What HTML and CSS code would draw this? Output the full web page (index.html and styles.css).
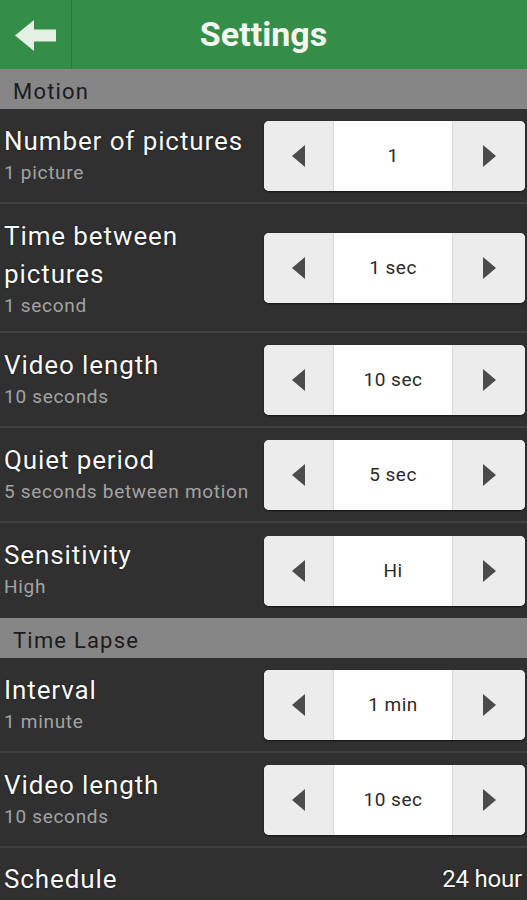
FILE: index.html
```html
<!DOCTYPE html>
<html lang="en">
<head>
  <meta charset="UTF-8">
  <title>Settings</title>
  <link rel="stylesheet" href="styles.css">
</head>
<body>

  <div class="topbar">
    <div class="back">
      <svg width="41" height="32" viewBox="0 0 41 32">
        <path d="M0 15.5 L19 0 L19 9.5 L41 9.5 L41 21.5 L19 21.5 L19 31 Z" fill="#e4f0e4"/>
      </svg>
    </div>
    <h1>Settings</h1>
  </div>

  <div class="section">Motion</div>

  <div class="row">
    <div class="label">
      <div class="title">Number of pictures</div>
      <div class="sub">1 picture</div>
    </div>
    <div class="stepper">
      <div class="btn"><span class="tri left"></span></div>
      <div class="value">1</div>
      <div class="btn"><span class="tri right"></span></div>
    </div>
  </div>

  <div class="row tall">
    <div class="label">
      <div class="title">Time between pictures</div>
      <div class="sub">1 second</div>
    </div>
    <div class="stepper">
      <div class="btn"><span class="tri left"></span></div>
      <div class="value">1 sec</div>
      <div class="btn"><span class="tri right"></span></div>
    </div>
  </div>

  <div class="row">
    <div class="label">
      <div class="title">Video length</div>
      <div class="sub">10 seconds</div>
    </div>
    <div class="stepper">
      <div class="btn"><span class="tri left"></span></div>
      <div class="value">10 sec</div>
      <div class="btn"><span class="tri right"></span></div>
    </div>
  </div>

  <div class="row">
    <div class="label">
      <div class="title">Quiet period</div>
      <div class="sub">5 seconds between motion</div>
    </div>
    <div class="stepper">
      <div class="btn"><span class="tri left"></span></div>
      <div class="value">5 sec</div>
      <div class="btn"><span class="tri right"></span></div>
    </div>
  </div>

  <div class="row last">
    <div class="label">
      <div class="title">Sensitivity</div>
      <div class="sub">High</div>
    </div>
    <div class="stepper">
      <div class="btn"><span class="tri left"></span></div>
      <div class="value">Hi</div>
      <div class="btn"><span class="tri right"></span></div>
    </div>
  </div>

  <div class="section">Time Lapse</div>

  <div class="row">
    <div class="label">
      <div class="title">Interval</div>
      <div class="sub">1 minute</div>
    </div>
    <div class="stepper">
      <div class="btn"><span class="tri left"></span></div>
      <div class="value">1 min</div>
      <div class="btn"><span class="tri right"></span></div>
    </div>
  </div>

  <div class="row">
    <div class="label">
      <div class="title">Video length</div>
      <div class="sub">10 seconds</div>
    </div>
    <div class="stepper">
      <div class="btn"><span class="tri left"></span></div>
      <div class="value">10 sec</div>
      <div class="btn"><span class="tri right"></span></div>
    </div>
  </div>

  <div class="row simple">
    <div class="title">Schedule</div>
    <div class="title small">24 hour</div>
  </div>

</body>
</html>
```

FILE: styles.css
```css
body {
  margin: 0;
  background: #303030;
  font-family: Roboto, "Liberation Sans", sans-serif;
  color: #fff;
  height: 900px;
  overflow: hidden;
}

.topbar {
  display: flex;
  height: 69px;
  background: #358e48;
}

.back {
  width: 71px;
  border-right: 1px solid #277a3a;
  display: flex;
  align-items: center;
  justify-content: center;
}

.back svg {
  margin-top: 2px;
}

.topbar h1 {
  flex: 1;
  margin: 0 0 0 -72px;
  text-align: center;
  line-height: 69px;
  font-size: 34px;
  font-weight: bold;
  color: #f2f7f2;
}

.section {
  height: 37px;
  line-height: 40px;
  padding-top: 3px;
  background: #868686;
  color: #1c1c1c;
  font-size: 22px;
  letter-spacing: 1.2px;
  padding-left: 13px;
}

.row {
  display: flex;
  align-items: center;
  justify-content: space-between;
  height: 93px;
  border-bottom: 2px solid #414141;
  padding: 0 2px 0 4px;
}

.row.tall {
  height: 127px;
}

.row.last {
  border-bottom: none;
  height: 95px;
}

.row.simple {
  height: 52px;
  border-bottom: none;
  align-items: flex-start;
  padding-top: 12px;
  padding-right: 5px;
}

.label {
  width: 256px;
  align-self: flex-start;
  padding-top: 13px;
}

.title {
  font-size: 26px;
  line-height: 38px;
  letter-spacing: 0.9px;
  color: #fafafa;
  text-shadow: 0 0 2px rgba(0,0,0,0.7);
}

.title.small {
  font-size: 24px;
  letter-spacing: -0.2px;
}

.sub {
  margin-top: 1px;
  font-size: 19px;
  line-height: 24px;
  letter-spacing: 0.7px;
  color: #a3a3a3;
}

.stepper {
  display: flex;
  width: 261px;
  height: 70px;
  border-radius: 5px;
  overflow: hidden;
  background: #ececec;
  box-shadow: 0 1px 2px rgba(0,0,0,0.6);
}

.btn {
  width: 69px;
  display: flex;
  align-items: center;
  justify-content: center;
  background: #ececec;
}

.btn:last-child {
  width: 72px;
  border-left: 1px solid #d9d9d9;
}

.value {
  flex: 1;
  background: #fff;
  color: #2a2a2a;
  font-size: 19px;
  letter-spacing: 0.5px;
  display: flex;
  align-items: center;
  justify-content: center;
  border-left: 1px solid #d9d9d9;
}

.tri {
  width: 0;
  height: 0;
  border-top: 11px solid transparent;
  border-bottom: 11px solid transparent;
}

.tri.left {
  border-right: 13px solid #4b4b4b;
}

.tri.right {
  border-left: 13px solid #4b4b4b;
}
```
